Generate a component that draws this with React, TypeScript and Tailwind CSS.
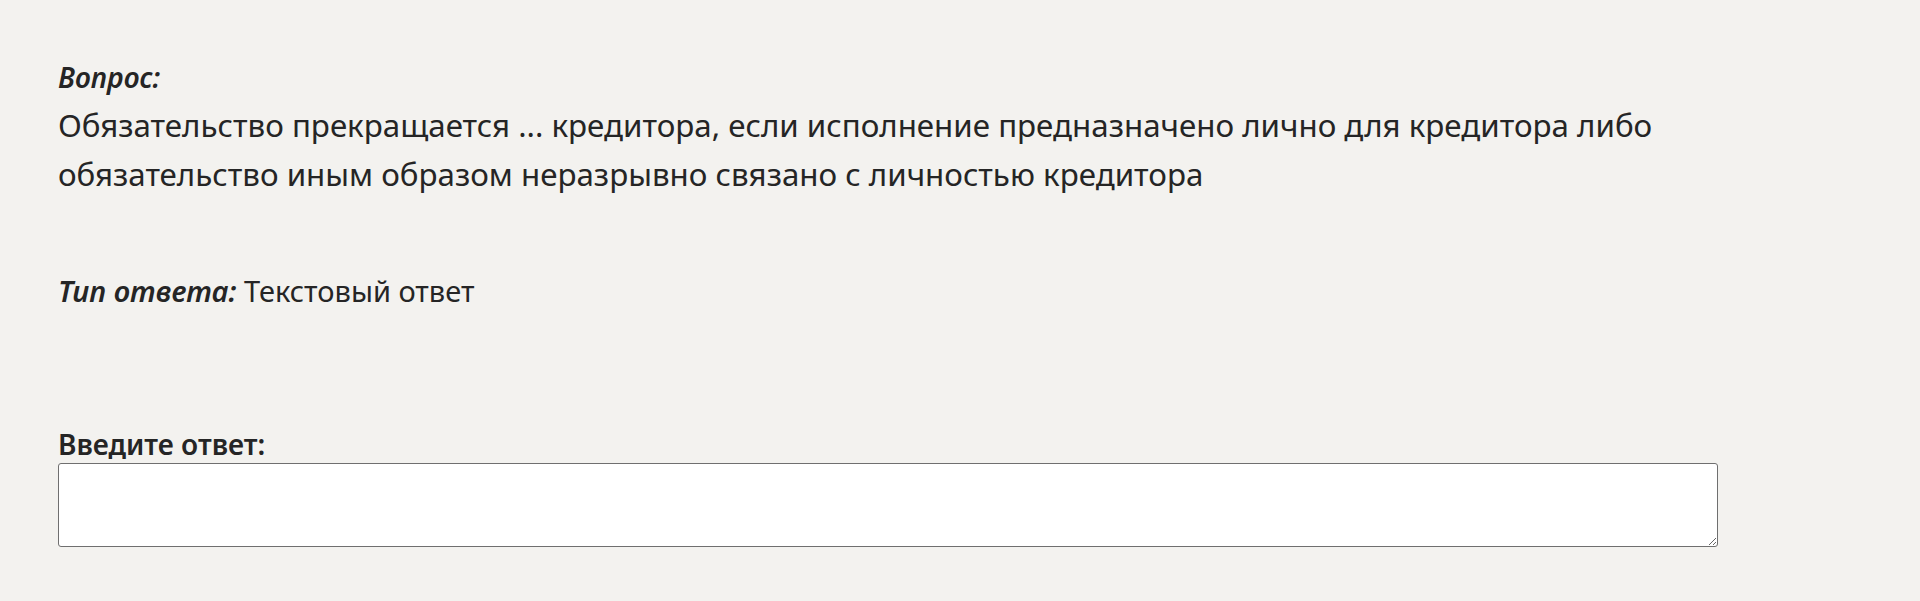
import React from "react";

export default function App() {
  return (
    <div
      className="min-h-[601px] w-full bg-[#f3f2ef] pl-[58px] pt-[61px] text-[#252525]"
      style={{ fontFamily: '"Noto Sans", "Open Sans", sans-serif' }}
    >
      <div className="text-[28px] leading-[32px] font-semibold italic">Вопрос:</div>
      <div className="mt-[8px] w-[1620px] text-[31.3px] leading-[49px]">
        Обязательство прекращается ... кредитора, если исполнение предназначено лично для кредитора либо
        обязательство иным образом неразрывно связано с личностью кредитора
      </div>
      <div className="mt-[72px] text-[29px] leading-[40px]">
        <span className="font-semibold italic">Тип ответа:</span> Текстовый ответ
      </div>
      <div className="mt-[115px] text-[28px] leading-[36px] font-semibold">Введите ответ:</div>
      <textarea className="mt-[1px] block h-[84px] w-[1660px] rounded-[3px] border border-[#6f6f6f] bg-white" />
    </div>
  );
}
